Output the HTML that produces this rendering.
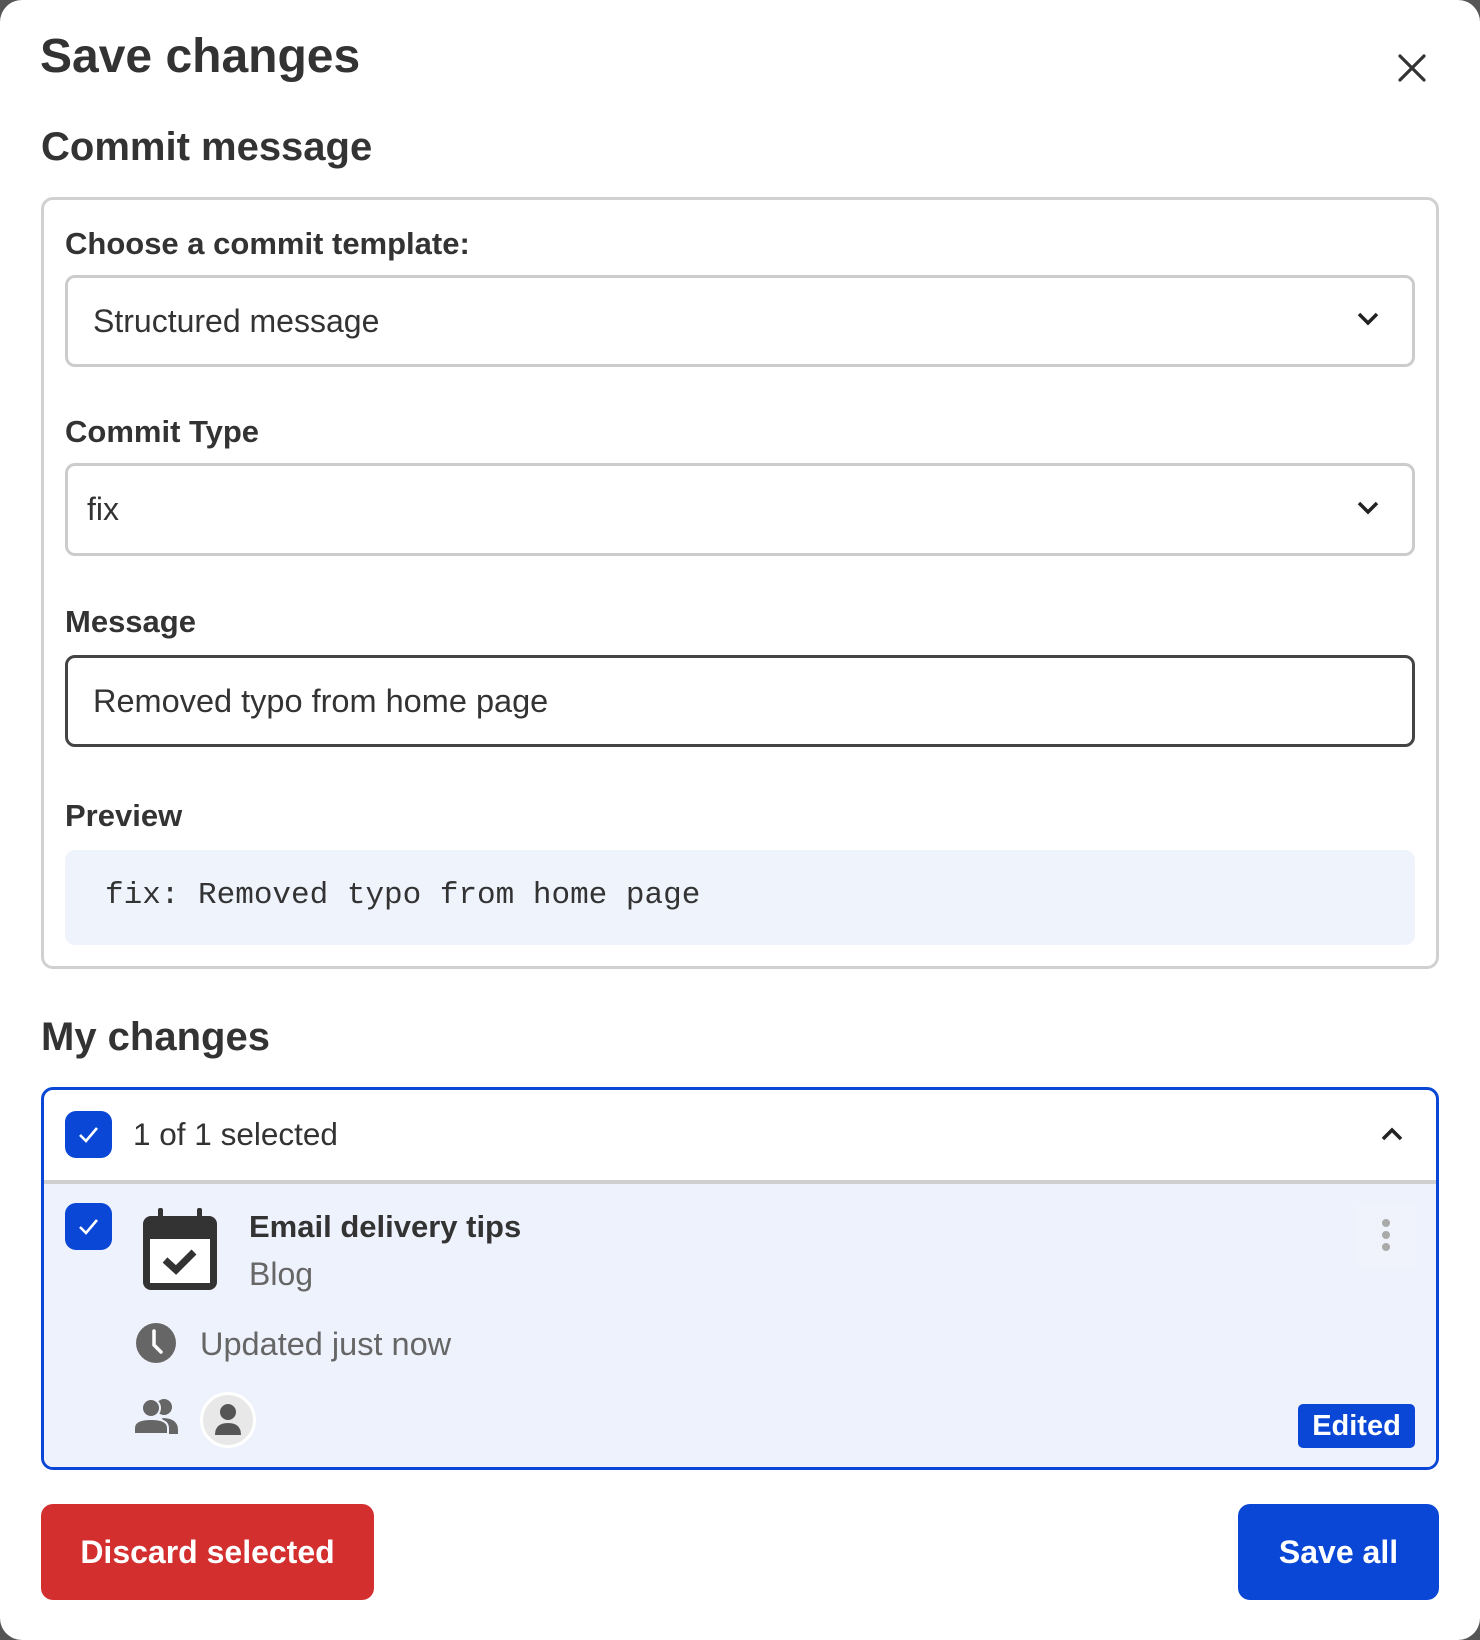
<!DOCTYPE html>
<html><head><meta charset="utf-8"><style>
*{box-sizing:border-box;margin:0;padding:0}
html,body{width:1480px;height:1640px;overflow:hidden;background:#555}
body{font-family:"Liberation Sans",sans-serif;color:#333}
#m{position:absolute;left:0;top:0;width:1480px;height:1640px;background:#fff;border-radius:22px}
.a{position:absolute;white-space:nowrap}
.h1{font-size:48px;font-weight:bold;color:#333}
.h2{font-size:40px;font-weight:bold;color:#333}
.lb{font-size:31px;font-weight:bold;color:#333}
.box{position:absolute;border-radius:12px}
.sel{position:absolute;left:65px;width:1350px;height:92px;border:3px solid #ccc;border-radius:10px;font-size:32px;line-height:86px;color:#333}
.cb{position:absolute;width:47px;height:47px;background:#0a47d6;border-radius:11px}
</style></head><body><div id="m">
<div class="a h1" style="left:40px;top:29px">Save changes</div>
<svg class="a" style="left:1398px;top:54px" width="28" height="28" viewBox="0 0 28 28"><path d="M2 2L26 26M26 2L2 26" stroke="#333" stroke-width="3.2" stroke-linecap="round"/></svg>
<div class="a h2" style="left:41px;top:125px">Commit message</div>
<div class="box" style="left:41px;top:197px;width:1398px;height:772px;border:3px solid #d0d0d0"></div>
<div class="a lb" style="left:65px;top:226px">Choose a commit template:</div>
<div class="sel" style="top:275px;padding-left:25px">Structured message</div>
<svg class="a" style="left:1356px;top:311px" width="24" height="16" viewBox="0 0 24 16"><path d="M3 3L12 12L21 3" fill="none" stroke="#222" stroke-width="3.5"/></svg>
<div class="a lb" style="left:65px;top:414px">Commit Type</div>
<div class="sel" style="top:463px;height:93px;padding-left:19px">fix</div>
<svg class="a" style="left:1356px;top:500px" width="24" height="16" viewBox="0 0 24 16"><path d="M3 3L12 12L21 3" fill="none" stroke="#222" stroke-width="3.5"/></svg>
<div class="a lb" style="left:65px;top:604px">Message</div>
<div class="sel" style="top:655px;border-color:#444;padding-left:25px;font-size:32.5px">Removed typo from home page</div>
<div class="a lb" style="left:65px;top:798px">Preview</div>
<div class="box" style="left:65px;top:850px;width:1350px;height:95px;background:#eef3fc;border-radius:10px"></div>
<div class="a" style="left:105px;top:878px;font-family:'Liberation Mono',monospace;font-size:31px;color:#333">fix: Removed typo from home page</div>
<div class="a h2" style="left:41px;top:1015px">My changes</div>
<div class="box" style="left:41px;top:1087px;width:1398px;height:383px;border:3px solid #0a47d6;overflow:hidden">
 <div style="position:absolute;left:0;top:90px;width:100%;height:4px;background:#cfcfcf"></div>
 <div style="position:absolute;left:0;top:94px;width:100%;height:300px;background:#eef2fc"></div>
</div>
<div class="cb" style="left:65px;top:1111px"></div>
<svg class="a" style="left:65px;top:1111px" width="47" height="47" viewBox="0 0 47 47"><path d="M15 24L21 30L32 17" fill="none" stroke="#fff" stroke-width="2.6"/></svg>
<div class="a" style="left:133px;top:1116px;font-size:31.5px;color:#333">1 of 1 selected</div>
<svg class="a" style="left:1380px;top:1126px" width="24" height="16" viewBox="0 0 24 16"><path d="M3 13L12 4L21 13" fill="none" stroke="#222" stroke-width="3.5"/></svg>
<div class="cb" style="left:65px;top:1203px"></div>
<svg class="a" style="left:65px;top:1203px" width="47" height="47" viewBox="0 0 47 47"><path d="M15 24L21 30L32 17" fill="none" stroke="#fff" stroke-width="2.6"/></svg>
<svg class="a" style="left:143px;top:1208px" width="74" height="84" viewBox="0 0 74 84"><rect x="15" y="0" width="5" height="14" rx="2" fill="#333"/><rect x="54" y="0" width="5" height="14" rx="2" fill="#333"/><rect x="0" y="8" width="74" height="74" rx="8" fill="#333"/><rect x="7" y="31" width="60" height="44" fill="#fff"/><path d="M22 52L33 62L51 44" fill="none" stroke="#333" stroke-width="7"/></svg>
<div class="a" style="left:249px;top:1209px;font-size:31px;font-weight:bold;color:#333">Email delivery tips</div>
<div class="a" style="left:249px;top:1256px;font-size:32px;color:#666">Blog</div>
<div class="a" style="left:1355px;top:1202px;width:62px;height:66px;background:#f0f3fc;border-radius:8px"></div>
<svg class="a" style="left:1380px;top:1218px" width="12" height="36" viewBox="0 0 12 36"><circle cx="6" cy="5" r="4" fill="#aaa"/><circle cx="6" cy="17" r="4" fill="#aaa"/><circle cx="6" cy="29" r="4" fill="#aaa"/></svg>
<svg class="a" style="left:135px;top:1322px" width="42" height="42" viewBox="0 0 42 42"><circle cx="21" cy="21" r="20" fill="#666"/><path d="M19 9V23L26 30" fill="none" stroke="#fff" stroke-width="3.5" stroke-linecap="round"/></svg>
<div class="a" style="left:200px;top:1326px;font-size:32.5px;color:#666">Updated just now</div>
<svg class="a" style="left:134px;top:1398px" width="46" height="36" viewBox="0 0 46 36"><circle cx="30" cy="9" r="8" fill="#666"/><path d="M28 20Q44 20 44 32V36H30V30Q30 24 28 20Z" fill="#666"/><circle cx="17" cy="10" r="9" fill="#666" stroke="#eef2fc" stroke-width="2"/><path d="M0 36V30Q0 21 17 21Q34 21 34 30V36Z" fill="#666" stroke="#eef2fc" stroke-width="2"/></svg>
<div class="a" style="left:200px;top:1392px;width:56px;height:56px;border-radius:50%;background:#e8e8e8;border:3px solid #fff"></div>
<svg class="a" style="left:210px;top:1401px" width="36" height="38" viewBox="0 0 36 38"><circle cx="18" cy="11" r="8" fill="#555"/><path d="M5 34Q5 22 18 22Q31 22 31 34Z" fill="#555"/></svg>
<div class="a" style="left:1298px;top:1404px;width:117px;height:44px;background:#0a47d6;border-radius:5px;color:#fff;font-size:29px;font-weight:bold;text-align:center;line-height:44px">Edited</div>
<div class="a" style="left:41px;top:1504px;width:333px;height:96px;background:#d32f2f;border-radius:12px;color:#fff;font-size:32px;font-weight:bold;text-align:center;line-height:96px">Discard selected</div>
<div class="a" style="left:1238px;top:1504px;width:201px;height:96px;background:#0a47d6;border-radius:12px;color:#fff;font-size:32px;font-weight:bold;text-align:center;line-height:96px">Save all</div>
</div></body></html>
